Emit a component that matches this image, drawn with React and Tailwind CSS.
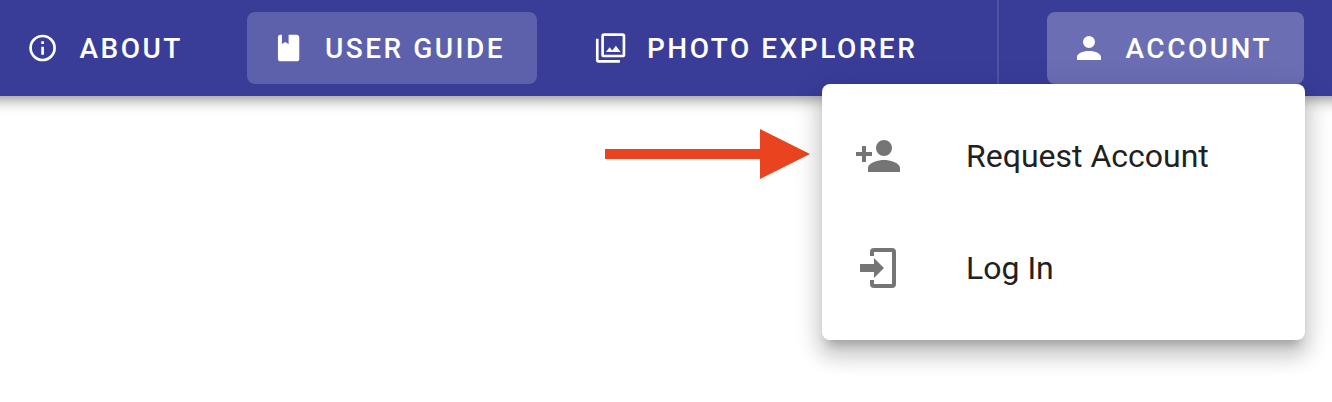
const ICONS = {
  info: 'M11,9H13V7H11M12,20C7.59,20 4,16.41 4,12C4,7.59 7.59,4 12,4C16.41,4 20,7.59 20,12C20,16.41 16.41,20 12,20M12,2A10,10 0 0,0 2,12A10,10 0 0,0 12,22A10,10 0 0,0 22,12A10,10 0 0,0 12,2M11,17H13V11H11V17Z',
  book: 'M18,22A2,2 0 0,0 20,20V4C20,2.89 19.1,2 18,2H12V9L9.5,7.5L7,9V2H6A2,2 0 0,0 4,4V20A2,2 0 0,0 6,22H18Z',
  photos: 'M21,17H7V3H21M21,1H7A2,2 0 0,0 5,3V17A2,2 0 0,0 7,19H21A2,2 0 0,0 23,17V3A2,2 0 0,0 21,1M3,5H1V21A2,2 0 0,0 3,23H19V21H3M15.96,10.29L13.21,13.83L11.25,11.47L8.5,15H19.5L15.96,10.29Z',
  account: 'M12,4A4,4 0 0,1 16,8A4,4 0 0,1 12,12A4,4 0 0,1 8,8A4,4 0 0,1 12,4M12,14C16.42,14 20,15.79 20,18V20H4V18C4,15.79 7.58,14 12,14Z',
  accountPlus: 'M15,14C12.33,14 7,15.33 7,18V20H23V18C23,15.33 17.67,14 15,14M6,10V7H4V10H1V12H4V15H6V12H9V10M15,12A4,4 0 0,0 19,8A4,4 0 0,0 15,4A4,4 0 0,0 11,8A4,4 0 0,0 15,12Z',
  login: 'M10,17V14H3V10H10V7L15,12L10,17M10,2H19A2,2 0 0,1 21,4V20A2,2 0 0,1 19,22H10A2,2 0 0,1 8,20V18H10V20H19V4H10V6H8V4A2,2 0 0,1 10,2Z',
};

function Icon({ name, className, viewBox = '0 0 24 24' }) {
  return (
    <svg viewBox={viewBox} fill="currentColor" className={`shrink-0 ${className}`}>
      <path d={ICONS[name]} />
    </svg>
  );
}

function NavButton({ icon, label, iconClass = 'size-8', viewBox = '0.3 0 24 24', className = '' }) {
  return (
    <button className={`flex h-[72px] shrink-0 items-center rounded-lg ${className}`}>
      <span className="mr-[18.5px] flex w-9 justify-center">
        <Icon name={icon} className={iconClass} viewBox={viewBox} />
      </span>
      <span className="whitespace-nowrap pt-0.5 text-[28px] font-medium leading-none tracking-[2.5px]">{label}</span>
    </button>
  );
}

function MenuItem({ icon, label }) {
  return (
    <li className="flex h-28 items-center gap-16 px-8">
      <Icon name={icon} className="size-12 text-[#757575]" />
      <span className="whitespace-nowrap text-[32px] leading-none text-[#212121]">{label}</span>
    </li>
  );
}

export default function App() {
  return (
    <div className="relative h-[402px] w-[1332px] overflow-hidden bg-white font-['Roboto',sans-serif]">
      <nav className="-mx-6 flex h-24 items-center bg-[#393d98] px-6 text-white shadow-[0_4px_8px_-2px_rgba(0,0,0,0.2),0_8px_10px_0_rgba(0,0,0,0.14),0_2px_20px_0_rgba(0,0,0,0.12)]">
        <NavButton icon="info" label="ABOUT" className="ml-px w-[214px] pl-6" />
        <NavButton icon="book" label="USER GUIDE" className="ml-8 w-[290px] bg-[#5d61ab] pl-[23.5px]" />
        <NavButton icon="photos" label="PHOTO EXPLORER" className="ml-8 w-[380px] pl-[23.5px]" />
        <div className="ml-12 h-full w-0.5 bg-white/12" />
        <NavButton
          icon="account"
          label="ACCOUNT"
          iconClass="size-9"
          viewBox="0 0 24 24"
          className="ml-12 w-[257px] bg-[#6b6eb3] pl-6"
        />
      </nav>

      <svg viewBox="0 0 205 50" className="absolute left-[605px] top-[129px] h-[50px] w-[205px] fill-[#e9441f]">
        <path d="M0 20H155V0L205 25L155 50V30H0Z" />
      </svg>

      <ul className="absolute left-[822px] top-[84px] w-[483px] rounded-lg bg-white py-4 shadow-[0_10px_10px_-6px_rgba(0,0,0,0.2),0_16px_20px_2px_rgba(0,0,0,0.14),0_6px_28px_4px_rgba(0,0,0,0.12)]">
        <MenuItem icon="accountPlus" label="Request Account" />
        <MenuItem icon="login" label="Log In" />
      </ul>
    </div>
  );
}
